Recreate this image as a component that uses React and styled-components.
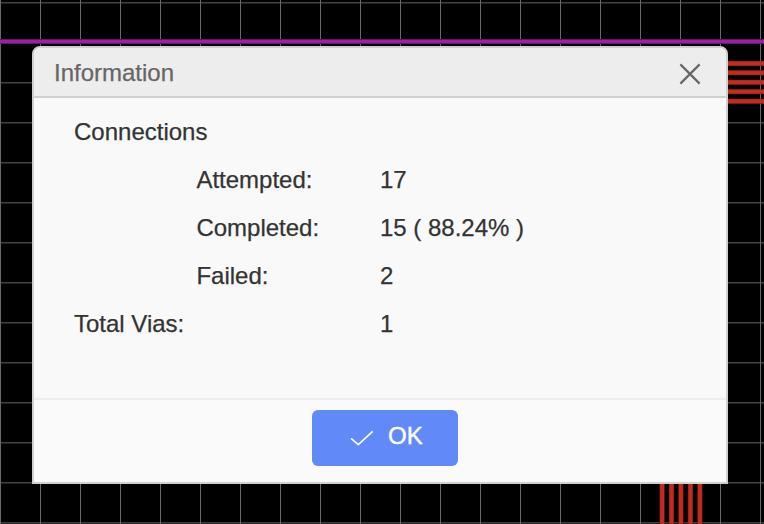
import React from "react";
import styled, { createGlobalStyle } from "styled-components";

const GlobalStyle = createGlobalStyle`
  * { box-sizing: border-box; }
  body { margin: 0; background: #000; overflow: hidden; }
`;

const Stage = styled.div`
  display: grid;
  width: 764px;
  height: 524px;
  overflow: hidden;
  font-family: "Liberation Sans", Arial, sans-serif;
  font-size: 24px;
  color: #333;
  -webkit-text-stroke: 0.25px currentColor;
  > * { grid-area: 1 / 1; }
`;

const Board = styled.svg`
  display: block;
  width: 764px;
  height: 524px;
`;

const Dialog = styled.section`
  display: flex;
  flex-direction: column;
  width: 696px;
  height: 438px;
  margin: 46px 0 0 32px;
  border: 2px solid #cfcfcf;
  border-radius: 8px 8px 0 0;
  background: #f9f9f9;
  overflow: hidden;
  z-index: 1;
`;

const Header = styled.header`
  display: flex;
  align-items: center;
  justify-content: space-between;
  flex: none;
  height: 50px;
  padding: 0 25px 0 20px;
  border-bottom: 2px solid #cfcfcf;
  background: #ededed;
`;

const Title = styled.h1`
  margin: 2px 0 0;
  font-size: 24px;
  font-weight: 400;
  line-height: 46px;
  color: #666;
`;

const CloseButton = styled.button`
  display: flex;
  padding: 0;
  margin-top: 4px;
  border: 0;
  background: none;
`;

const Summary = styled.dl`
  flex: 1;
  margin: 0;
  padding: 10px 40px 0;
`;

const Row = styled.div`
  display: grid;
  grid-template-columns: ${(p) => (p.$nested ? "183.6px 1fr" : "306px 1fr")};
  padding-left: ${(p) => (p.$nested ? "122.4px" : "0")};
  line-height: 48px;
`;

const Label = styled.dt`
  white-space: nowrap;
`;

const Value = styled.dd`
  margin: 0;
  white-space: nowrap;
`;

const Footer = styled.footer`
  display: flex;
  justify-content: center;
  flex: none;
  height: 84px;
  padding: 10px 0 0 10px;
  border-top: 2px solid #ededed;
  background: #fafafa;
`;

const OkButton = styled.button`
  display: flex;
  align-items: center;
  width: 146px;
  height: 56px;
  padding: 0 0 4px 38px;
  gap: 14px;
  border: 0;
  border-radius: 6px;
  background: #6189f7;
  color: #fff;
  font: inherit;
  line-height: 52px;
  -webkit-text-stroke: 0.4px #fff;
`;

const CheckIcon = styled.svg`
  flex: none;
  margin-top: 4px;
`;

const columns = Array.from({ length: 20 }, (_, i) => i * 40);
const rows = Array.from({ length: 14 }, (_, i) => 2 + i * 40);
const rightTraces = [61, 70.3, 79.8, 89.2, 98.8];
const bottomTraces = [659.7, 669.1, 678.5, 688, 697.5];

const connections = [
  { label: "Attempted:", value: "17" },
  { label: "Completed:", value: "15 ( 88.24% )" },
  { label: "Failed:", value: "2" },
];

export default function App() {
  return (
    <>
      <GlobalStyle />
      <Stage>
        <Board viewBox="0 0 764 524" aria-hidden="true">
          <rect width="764" height="524" fill="#000" />
          {rows.map((y) => (
            <g key={y}>
              <rect y={y} width="764" height="1" fill="#404040" />
              <rect y={y + 1} width="764" height="1" fill="#242424" />
            </g>
          ))}
          {columns.map((x) => (
            <rect key={x} x={x} width="1" height="524" fill="#686868" />
          ))}
          <rect y="39" width="764" height="5" fill="#641569" />
          <rect y="40" width="764" height="3" fill="#9f209f" />
          {rightTraces.map((y) => (
            <g key={y}>
              <rect x="720" y={y} width="44" height="5" fill="#8c2016" />
              <rect x="720" y={y + 0.5} width="44" height="3.9" fill="#c22b1f" />
            </g>
          ))}
          {bottomTraces.map((x) => (
            <g key={x}>
              <rect x={x - 0.2} y="480" width="5.2" height="44" fill="#6f180f" />
              <rect x={x + 0.4} y="480" width="4" height="44" fill="#c22b1f" />
            </g>
          ))}
        </Board>
        <Dialog role="dialog" aria-label="Information">
          <Header>
            <Title>Information</Title>
            <CloseButton aria-label="Close">
              <svg width="22" height="22" viewBox="0 0 22 22" fill="none" stroke="#666" strokeWidth="2.2">
                <path d="M1.4 1.4 20.6 20.6M20.6 1.4 1.4 20.6" />
              </svg>
            </CloseButton>
          </Header>
          <Summary>
            <Row>
              <Label>Connections</Label>
            </Row>
            {connections.map((item) => (
              <Row key={item.label} $nested>
                <Label>{item.label}</Label>
                <Value>{item.value}</Value>
              </Row>
            ))}
            <Row>
              <Label>Total Vias:</Label>
              <Value>1</Value>
            </Row>
          </Summary>
          <Footer>
            <OkButton>
              <CheckIcon width="24" height="16" viewBox="0 0 24 16" fill="none" stroke="#fff" strokeWidth="1.6">
                <path d="M1 8.3 8.3 14.6 22.7 1.3" />
              </CheckIcon>
              OK
            </OkButton>
          </Footer>
        </Dialog>
      </Stage>
    </>
  );
}
